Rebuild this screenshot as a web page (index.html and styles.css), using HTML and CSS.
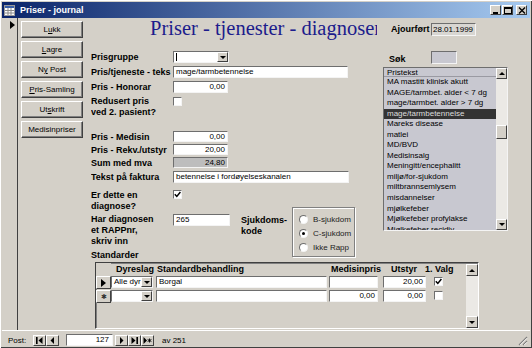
FILE: index.html
```html
<!DOCTYPE html>
<html lang="no">
<head>
  <meta charset="UTF-8">
  <title>Priser - journal</title>
  <link rel="stylesheet" href="styles.css">
</head>
<body>
<div class="window">
  <div class="titlebar">
    <svg class="appicon" width="11" height="11" viewBox="0 0 11 11">
      <rect x="0.5" y="0.5" width="10" height="10" fill="#fff" stroke="#9a9a9a"/>
      <rect x="1" y="1" width="9" height="2" fill="#3a5fa8"/>
      <path d="M1 5.5h9M1 8h9M4 3v7M7 3v7" stroke="#8a8a8a"/>
    </svg>
    <span class="wintitle">Priser - journal</span>
    <div class="winbtns">
      <span class="wbtn"><svg width="8" height="7"><rect x="1" y="5" width="5" height="2" fill="#000"/></svg></span>
      <span class="wbtn"><svg width="8" height="7"><rect x="0.5" y="0.5" width="7" height="6" fill="none" stroke="#000"/><path d="M0 1.5h8" stroke="#000"/></svg></span>
      <span class="wbtn close"><svg width="8" height="7"><path d="M1 0.5l6 6M7 0.5l-6 6" stroke="#000" stroke-width="1.4"/></svg></span>
    </div>
  </div>

  <div class="client">
    <div class="recsel"><span class="tri"></span></div>

    <div class="btncol">
      <button class="cmd">L<u>u</u>kk</button>
      <button class="cmd"><u>L</u>agre</button>
      <button class="cmd">N<u>y</u> Post</button>
      <button class="cmd"><u>P</u>ris-Samling</button>
      <button class="cmd">Ut<u>s</u>krift</button>
      <button class="cmd">Medisinpriser</button>
    </div>

    <div class="form">
      <div class="upper">
        <div class="leftcol">
          <h1 class="heading">Priser - tjenester - diagnoser</h1>
          <div class="fields">
            <div class="lbl">Prisgruppe</div>
            <div class="cell">
              <div class="combo w-grp"><span class="cbox"><span class="caret"></span></span><span class="dd"><span class="down"></span></span></div>
            </div>

            <div class="lbl">Pris/tjeneste - teks</div>
            <div class="cell"><div class="field w-long">mage/tarmbetennelse</div></div>

            <div class="lbl">Pris - Honorar</div>
            <div class="cell"><div class="field num w-num">0,00</div></div>

            <div class="lbl multi">Redusert pris<br>ved 2. pasient?</div>
            <div class="cell"><span class="chk top1"></span></div>

            <div class="lbl">Pris - Medisin</div>
            <div class="cell"><div class="field num w-num small">0,00</div></div>

            <div class="lbl">Pris - Rekv./utstyr</div>
            <div class="cell"><div class="field num w-num small">20,00</div></div>

            <div class="lbl">Sum med mva</div>
            <div class="cell"><div class="field num w-num small locked">24,80</div></div>

            <div class="lbl">Tekst på faktura</div>
            <div class="cell"><div class="field w-long2">betennelse i fordøyelseskanalen</div></div>

            <div class="lbl multi">Er dette en<br>diagnose?</div>
            <div class="cell">
              <span class="chk"><svg width="7" height="7"><polyline points="0.8,3.2 2.8,5.4 6.4,1" fill="none" stroke="#000" stroke-width="1.5"/></svg></span>
            </div>

            <div class="lbl multi">Har diagnosen<br>et RAPPnr,<br>skriv inn</div>
            <div class="cell rapp">
              <div class="field w-rapp">265</div>
              <div class="lbl multi sjk">Sjukdoms-<br>kode</div>
              <div class="optgroup">
                <div class="opt"><span class="radio"></span>B-sjukdom</div>
                <div class="opt"><span class="radio on"></span>C-sjukdom</div>
                <div class="opt"><span class="radio"></span>Ikke Rapp</div>
              </div>
            </div>
          </div>
        </div>

        <div class="rightcol">
          <div class="rrow">
            <span class="lbl ajl">Ajourført</span>
            <span class="field ajour">28.01.1999</span>
          </div>
          <div class="rrow sok">
            <span class="lbl sokl">Søk</span>
            <span class="field sokf"></span>
          </div>
          <div class="list">
            <div class="items">
              <div class="lhead">Pristekst</div>
              <div class="it">MA mastitt klinisk akutt</div>
              <div class="it">MAGE/tarmbet. alder &lt; 7 dg</div>
              <div class="it">mage/tarmbet. alder &gt; 7 dg</div>
              <div class="it sel">mage/tarmbetennelse</div>
              <div class="it">Mareks disease</div>
              <div class="it">matlei</div>
              <div class="it">MD/BVD</div>
              <div class="it">Medisinsalg</div>
              <div class="it">Meningitt/encephalitt</div>
              <div class="it">miljø/for-sjukdom</div>
              <div class="it">miltbrannsemlysem</div>
              <div class="it">misdannelser</div>
              <div class="it">mjølkefeber</div>
              <div class="it">Mjølkefeber profylakse</div>
              <div class="it">Mjølkefeber recidiv</div>
            </div>
            <div class="vscroll">
              <span class="sbtn"><span class="up"></span></span>
              <span class="track"><span class="thumb"></span></span>
              <span class="sbtn"><span class="down"></span></span>
            </div>
          </div>
        </div>
      </div>

      <div class="stdlabel">Standarder</div>

      <div class="subform">
        <div class="sf-body">
          <div class="sf-row head">
            <span class="c-sel blank"></span>
            <span class="c-dyr">Dyreslag</span>
            <span class="c-std">Standardbehandling</span>
            <span class="c-med">Medisinpris</span>
            <span class="c-ut">Utstyr</span>
            <span class="c-valg"><span class="hv">1. Valg</span></span>
          </div>
          <div class="sf-row">
            <span class="c-sel"><span class="tri"></span></span>
            <span class="c-dyr combo"><span class="cbox">Alle dyr</span><span class="dd"><span class="down"></span></span></span>
            <span class="c-std field">Borgal</span>
            <span class="c-med field"></span>
            <span class="c-ut field num">20,00</span>
            <span class="c-valg"><span class="chk"><svg width="7" height="7"><polyline points="0.8,3.2 2.8,5.4 6.4,1" fill="none" stroke="#000" stroke-width="1.5"/></svg></span></span>
          </div>
          <div class="sf-row">
            <span class="c-sel"><span class="star">✱</span></span>
            <span class="c-dyr combo"><span class="cbox"></span><span class="dd"><span class="down"></span></span></span>
            <span class="c-std field"></span>
            <span class="c-med field num">0,00</span>
            <span class="c-ut field num">0,00</span>
            <span class="c-valg"><span class="chk"></span></span>
          </div>
        </div>
        <div class="vscroll sf-scroll">
          <span class="sbtn"><span class="up"></span></span>
          <span class="track"></span>
          <span class="sbtn"><span class="down"></span></span>
        </div>
      </div>
    </div>
  </div>

  <div class="navbar">
    <span class="postlbl">Post:</span>
    <span class="nbtn"><svg width="7" height="7"><rect x="0" y="0" width="1.6" height="7"/><polygon points="6.5,0 2.5,3.5 6.5,7"/></svg></span>
    <span class="nbtn"><svg width="7" height="7"><polygon points="5,0 1.5,3.5 5,7"/></svg></span>
    <span class="field navnum">127</span>
    <span class="nbtn"><svg width="7" height="7"><polygon points="2,0 5.5,3.5 2,7"/></svg></span>
    <span class="nbtn"><svg width="7" height="7"><polygon points="0.5,0 4.5,3.5 0.5,7"/><rect x="5.4" y="0" width="1.6" height="7"/></svg></span>
    <span class="nbtn"><svg width="9" height="7"><polygon points="0.5,0 4,3.5 0.5,7"/><path d="M6.5 1.5v4M4.6 2.5l3.8 2M4.6 4.5l3.8-2" stroke="#000" stroke-width="0.9"/></svg></span>
    <span class="avtext">av 251</span>
    <svg class="grip" width="11" height="11" viewBox="0 0 11 11">
      <path d="M10 2L2 10M10 6L6 10" stroke="#808080" stroke-width="1.2"/>
      <path d="M10 3.2L3.2 10M10 7.2L7.2 10" stroke="#fff" stroke-width="0.8"/>
    </svg>
  </div>
</div>
</body>
</html>
```

FILE: styles.css
```css
* {
  box-sizing: border-box;
}
body {
  margin: 0;
  background: #d4d0c8;
  font-family: "Liberation Sans", Arial, sans-serif;
  font-size: 8px;
  color: #000;
}
.window {
  width: 532px;
  height: 348px;
  padding: 2px 2px 0 2px;
  background: #d4d0c8;
  box-shadow: inset 1px 1px #ffffff, inset -1px -1px #404040;
  display: flex;
  flex-direction: column;
  overflow: hidden;
}

/* title bar */
.titlebar {
  flex: none;
  height: 16px;
  display: flex;
  align-items: center;
  padding: 0 3px 0 2px;
  background: linear-gradient(to right, #0a246a, #a6caf0);
  color: #fff;
  font-weight: bold;
  font-size: 9px;
}
.appicon {
  margin-right: 5px;
}
.wintitle {
  flex: 1;
}
.winbtns {
  display: flex;
  gap: 1px;
}
.wbtn {
  width: 11px;
  height: 10px;
  background: #d4d0c8;
  border: 1px solid;
  border-color: #fff #404040 #404040 #fff;
  display: flex;
  align-items: center;
  justify-content: center;
}
.wbtn.close {
  margin-left: 2px;
}

/* client area */
.client {
  flex: none;
  height: 313px;
  display: flex;
  border-bottom: 1px solid #fff;
}
.recsel {
  width: 16px;
  border-right: 1px solid #404040;
  padding: 3px 0 0 8px;
}
.tri {
  display: block;
  width: 0;
  height: 0;
  border-left: 5px solid #000;
  border-top: 4px solid transparent;
  border-bottom: 4px solid transparent;
}
.btncol {
  width: 70px;
  padding: 3px 0 0 3px;
  display: flex;
  flex-direction: column;
  gap: 3px;
}
.cmd {
  width: 62px;
  height: 17px;
  padding: 0;
  background: #d4d0c8;
  border: 1px solid;
  border-color: #fff #404040 #404040 #fff;
  box-shadow: inset -1px -1px #808080;
  font-family: "Liberation Sans", Arial, sans-serif;
  font-size: 8px;
  color: #000;
}

.form {
  flex: 1;
  display: flex;
  flex-direction: column;
}
.upper {
  height: 231px;
  display: flex;
}
.leftcol {
  width: 289px;
}
.heading {
  margin: 0 0 0 62px;
  width: 227px;
  height: 33px;
  overflow: hidden;
  white-space: nowrap;
  font-family: "Liberation Serif", "Times New Roman", serif;
  font-size: 20.5px;
  line-height: 21px;
  font-weight: normal;
  color: #1c1c8c;
}

.fields {
  display: grid;
  grid-template-columns: 82px 1fr;
  grid-template-rows: 15px 15px 15px 35px 13px 13px 14px 19px 24px 35px;
  padding-left: 3px;
}
.lbl {
  font-weight: bold;
  font-size: 9px;
  line-height: 12px;
  white-space: nowrap;
  overflow: hidden;
}
.lbl.multi {
  line-height: 11px;
}
.cell {
  display: flex;
  align-items: flex-start;
}

.field {
  display: block;
  height: 12px;
  background: #fff;
  border: 1px solid;
  border-color: #6e6e6e #f4f4f4 #f4f4f4 #6e6e6e;
  padding: 0 2px;
  font-size: 8px;
  line-height: 10px;
  white-space: nowrap;
  overflow: hidden;
}
.field.num {
  text-align: right;
}
.field.small {
  height: 11px;
  line-height: 9px;
}
.field.locked {
  background: #bdbdbd;
}
.w-long {
  width: 175px;
}
.w-long2 {
  width: 176px;
}
.w-num {
  width: 55px;
}
.w-rapp {
  width: 57px;
}

.combo {
  display: flex;
  height: 12px;
  background: #fff;
  border: 1px solid;
  border-color: #6e6e6e #f4f4f4 #f4f4f4 #6e6e6e;
}
.w-grp {
  width: 56px;
}
.cbox {
  flex: 1;
  padding: 0 2px;
  line-height: 10px;
  display: flex;
  align-items: center;
  overflow: hidden;
  white-space: nowrap;
}
.caret {
  width: 1px;
  height: 8px;
  background: #000;
}
.dd {
  width: 11px;
  background: #d4d0c8;
  border: 1px solid;
  border-color: #fff #404040 #404040 #fff;
  display: flex;
  align-items: center;
  justify-content: center;
}
.down {
  width: 0;
  height: 0;
  border-left: 3px solid transparent;
  border-right: 3px solid transparent;
  border-top: 3px solid #000;
}
.up {
  width: 0;
  height: 0;
  border-left: 3px solid transparent;
  border-right: 3px solid transparent;
  border-bottom: 3px solid #000;
}

.chk {
  width: 9px;
  height: 9px;
  background: #fff;
  border: 1px solid;
  border-color: #6e6e6e #f4f4f4 #f4f4f4 #6e6e6e;
  display: flex;
  align-items: center;
  justify-content: center;
}
.chk.top1 {
  margin-top: 1px;
}

.rapp .sjk {
  width: 51px;
  margin-left: 11px;
  padding-top: 1px;
}
.optgroup {
  width: 63px;
  height: 50px;
  margin-top: -7px;
  padding: 4px 0 0 6px;
  border: 1px solid #808080;
  box-shadow: inset 1px 1px #fff, 1px 1px #fff;
}
.opt {
  height: 14px;
  display: flex;
  align-items: center;
  gap: 5px;
  color: #222;
}
.radio {
  width: 9px;
  height: 9px;
  border-radius: 50%;
  background: #fff;
  border: 1px solid;
  border-color: #6e6e6e #f4f4f4 #f4f4f4 #6e6e6e;
  display: flex;
  align-items: center;
  justify-content: center;
}
.radio.on::after {
  content: "";
  width: 3px;
  height: 3px;
  border-radius: 50%;
  background: #000;
}

/* right column */
.rightcol {
  width: 127px;
  margin-left: 6px;
  padding-top: 5px;
}
.rrow {
  display: flex;
  height: 13px;
}
.ajl {
  width: 40px;
  margin-left: 8px;
}
.field.ajour {
  width: 45px;
  height: 13px;
  line-height: 11px;
  background: #d8d6d2;
  padding: 0 1px;
}
.rrow.sok {
  margin-top: 15px;
}
.sokl {
  width: 42px;
  margin-left: 6px;
  padding-top: 2px;
}
.field.sokf {
  width: 26px;
  height: 13px;
  background: #c8c8d0;
}
.list {
  margin-top: 3px;
  width: 125px;
  height: 164px;
  display: flex;
  background: #c8c8d0;
  border: 1px solid;
  border-color: #6e6e6e #f4f4f4 #f4f4f4 #6e6e6e;
}
.items {
  flex: 1;
  overflow: hidden;
  font-size: 8px;
}
.lhead {
  height: 9px;
  line-height: 9px;
  padding-left: 3px;
  border-bottom: 1px solid #9a9aa2;
}
.it {
  height: 10.56px;
  line-height: 10.56px;
  padding-left: 3px;
  white-space: nowrap;
}
.it.sel {
  background: #333;
  color: #ddd;
}
.vscroll {
  width: 11px;
  display: flex;
  flex-direction: column;
}
.sbtn {
  flex: none;
  height: 11px;
  background: #d4d0c8;
  border: 1px solid;
  border-color: #fff #404040 #404040 #fff;
  display: flex;
  align-items: center;
  justify-content: center;
}
.track {
  flex: 1;
  background: #ebe9e5;
}
.thumb {
  display: block;
  margin-top: 46px;
  height: 14px;
  background: #d4d0c8;
  border: 1px solid;
  border-color: #fff #404040 #404040 #fff;
}

/* subform */
.stdlabel {
  height: 13px;
  padding-left: 3px;
  font-weight: bold;
  font-size: 9px;
  line-height: 12px;
}
.subform {
  margin-left: 7px;
  width: 384px;
  height: 67px;
  display: flex;
  border: 1px solid;
  border-color: #404040 #fff #fff #404040;
  box-shadow: inset 1px 1px #808080;
}
.sf-body {
  flex: 1;
}
.sf-scroll {
  width: 12px;
  padding-top: 1px;
}
.sf-scroll .sbtn {
  height: 12px;
}
.sf-row {
  display: flex;
  height: 14px;
}
.sf-row.head {
  height: 13px;
  font-weight: bold;
  font-size: 9px;
  line-height: 13px;
}
.c-sel {
  width: 15px;
  height: 13px;
  background: #d4d0c8;
  border: 1px solid;
  border-color: #fff #404040 #404040 #fff;
  display: flex;
  align-items: center;
  justify-content: center;
}
.c-sel.blank {
  border: none;
}
.star {
  font-size: 7px;
  line-height: 7px;
  color: #333;
}
.c-dyr {
  width: 42px;
}
.head .c-dyr {
  padding-left: 5px;
}
.c-std {
  width: 171px;
  margin-left: 3px;
}
.head .c-std {
  padding-left: 1px;
}
.c-med {
  width: 49px;
  margin-left: 2px;
}
.head .c-med {
  padding-left: 2px;
  white-space: nowrap;
}
.c-ut {
  width: 43px;
  margin-left: 5px;
}
.head .c-ut {
  padding-left: 8px;
}
.c-valg {
  width: 9px;
  margin-left: 8px;
  padding-top: 1px;
}
.head .c-valg {
  padding-top: 0;
}
.hv {
  display: block;
  margin-left: -9px;
  white-space: nowrap;
}

/* navigation bar */
.navbar {
  flex: 1;
  display: flex;
  align-items: center;
  padding: 1px 0 0 6px;
}
.postlbl {
  width: 25px;
}
.nbtn {
  width: 13px;
  height: 11px;
  background: #d4d0c8;
  border: 1px solid;
  border-color: #fff #404040 #404040 #fff;
  display: flex;
  align-items: center;
  justify-content: center;
}
.field.navnum {
  width: 47px;
  height: 12px;
  margin: 0 2px 0 7px;
  text-align: right;
  padding-right: 3px;
}
.avtext {
  margin-left: 8px;
}
.grip {
  margin-left: auto;
  margin-right: 2px;
  align-self: flex-end;
  margin-bottom: 2px;
}
```
